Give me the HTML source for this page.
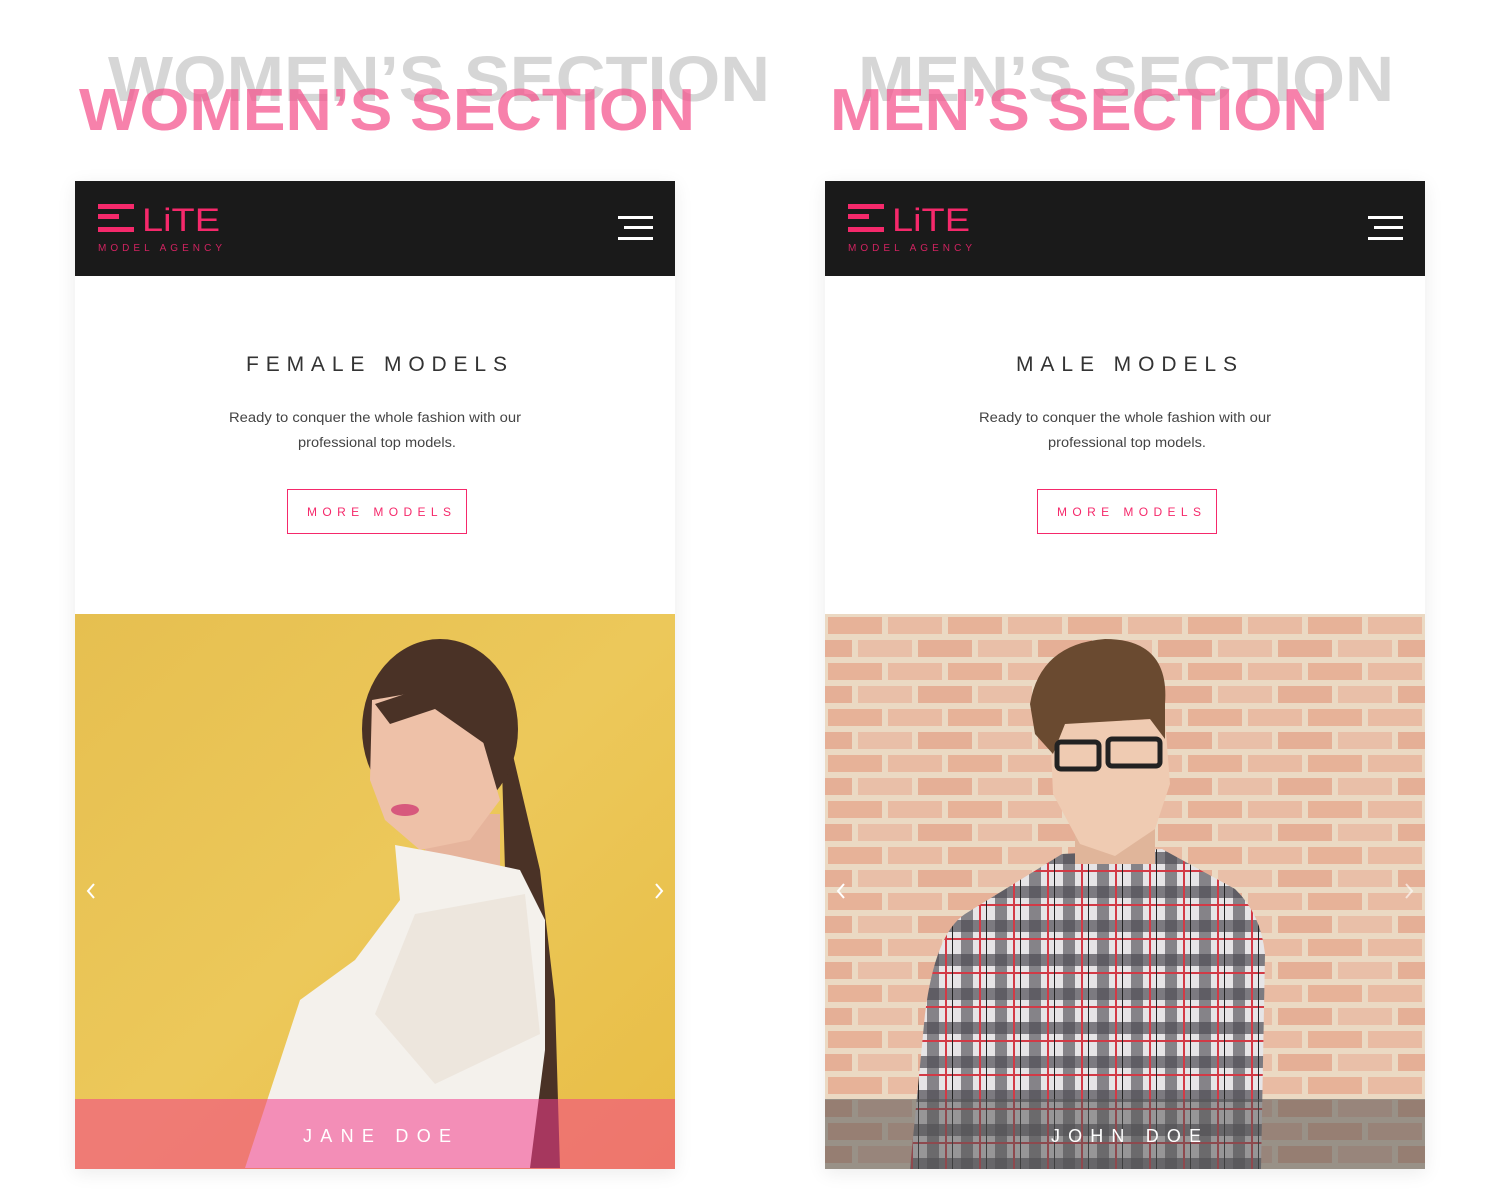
<!DOCTYPE html>
<html><head><meta charset="utf-8"><style>
html,body{margin:0;padding:0;background:#fff;width:1500px;height:1200px;overflow:hidden;font-family:"Liberation Sans",sans-serif}
.abs{position:absolute}
.panel{position:absolute;top:181px;width:600px;height:988px;background:#fff;box-shadow:0 4px 18px rgba(0,0,0,0.08)}
.nav{position:absolute;left:0;top:0;width:600px;height:95px;background:#1a1a1a}
</style></head><body>
<svg class="abs" style="left:0;top:0" width="1500" height="170">
<g font-family="Liberation Sans, sans-serif" font-weight="bold">
<text x="108" y="101" font-size="64" fill="#d6d6d6" textLength="662" lengthAdjust="spacingAndGlyphs">WOMEN’S SECTION</text>
<text x="79" y="130" font-size="59" fill="#f4508a" fill-opacity="0.72" textLength="616" lengthAdjust="spacingAndGlyphs">WOMEN’S SECTION</text>
<text x="858" y="101" font-size="64" fill="#d6d6d6" textLength="536" lengthAdjust="spacingAndGlyphs">MEN’S SECTION</text>
<text x="830" y="130" font-size="59" fill="#f4508a" fill-opacity="0.72" textLength="498" lengthAdjust="spacingAndGlyphs">MEN’S SECTION</text>
</g></svg>

<div class="panel" style="left:75px">
 <div class="nav">
  <svg width="600" height="95">
   <rect x="23" y="23" width="36" height="5" fill="#f5296b"/><rect x="23" y="33" width="21" height="5" fill="#f5296b"/><rect x="23" y="46" width="36" height="5" fill="#f5296b"/>
   <text x="67" y="50" font-size="32" fill="#f5296b" font-family="Liberation Sans,sans-serif" textLength="78" lengthAdjust="spacingAndGlyphs">LiTE</text>
   <text x="23" y="70" font-size="10" fill="#d02360" font-family="Liberation Sans,sans-serif" textLength="124" lengthAdjust="spacing">MODEL AGENCY</text>
   <rect x="543" y="35" width="35" height="3" fill="#fff"/><rect x="549" y="45" width="29" height="3" fill="#fff"/><rect x="543" y="56" width="35" height="3" fill="#fff"/>
  </svg>
 </div>
 <svg class="abs" style="left:0;top:95px" width="600" height="338">
  <text x="171" y="95" font-size="21" fill="#333" font-family="Liberation Sans,sans-serif" textLength="261" lengthAdjust="spacing">FEMALE MODELS</text>
  <text x="154" y="146" font-size="13.5" fill="#444" font-family="Liberation Sans,sans-serif" textLength="292" lengthAdjust="spacingAndGlyphs">Ready to conquer the whole fashion with our</text>
  <text x="223" y="171" font-size="13.5" fill="#444" font-family="Liberation Sans,sans-serif" textLength="158" lengthAdjust="spacingAndGlyphs">professional top models.</text>
  <rect x="212.5" y="213.5" width="179" height="44" fill="none" stroke="#f5296b" stroke-width="1"/>
  <text x="232" y="240" font-size="12" fill="#f5296b" font-family="Liberation Sans,sans-serif" textLength="144" lengthAdjust="spacing">MORE MODELS</text>
 </svg>
 <svg class="abs" style="left:0;top:433px" width="600" height="555">
  <defs><linearGradient id="yb" x1="0" y1="0" x2="1" y2="1"><stop offset="0" stop-color="#e6bf50"/><stop offset="0.5" stop-color="#ecc85a"/><stop offset="1" stop-color="#e8bd45"/></linearGradient></defs>
  <rect width="600" height="555" fill="url(#yb)"/>
  <path d="M425,86 L465,256 L480,386 L485,554 L455,554 L450,386 L430,256Z" fill="#4a3226"/>
  <ellipse cx="365" cy="115" rx="78" ry="90" fill="#4a3226"/>
  <rect x="350" y="200" width="75" height="60" fill="#e6b49c"/>
  <path d="M297,86 L355,76 L400,100 L425,186 L395,226 L345,236 L310,206 L295,166Z" fill="#eec1a8"/>
  <path d="M300,90 L360,70 L420,100 L410,130 L360,95 L315,110Z" fill="#4a3226"/>
  <ellipse cx="330" cy="196" rx="14" ry="6" fill="#d7597d"/>
  <path d="M320,231 L375,241 L445,256 L470,306 L470,436 L455,554 L170,554 L225,386 L280,346 L325,286Z" fill="#f4f1ec"/>
  <path d="M340,300 L450,280 L465,420 L360,470 L300,400Z" fill="#ebe3da" opacity="0.8"/>
  <rect x="0" y="485" width="600" height="70" fill="#f23c8c" fill-opacity="0.55"/>
  <text x="228" y="528" font-size="18" fill="#fff" font-family="Liberation Sans,sans-serif" textLength="148" lengthAdjust="spacing">JANE DOE</text>
  <path d="M19,270 L13,277 L19,284" stroke="#fff" stroke-width="2" fill="none"/>
  <path d="M581,270 L587,277 L581,284" stroke="#fff" stroke-width="2" fill="none"/>
 </svg>
</div>

<div class="panel" style="left:825px">
 <div class="nav">
  <svg width="600" height="95">
   <rect x="23" y="23" width="36" height="5" fill="#f5296b"/><rect x="23" y="33" width="21" height="5" fill="#f5296b"/><rect x="23" y="46" width="36" height="5" fill="#f5296b"/>
   <text x="67" y="50" font-size="32" fill="#f5296b" font-family="Liberation Sans,sans-serif" textLength="78" lengthAdjust="spacingAndGlyphs">LiTE</text>
   <text x="23" y="70" font-size="10" fill="#d02360" font-family="Liberation Sans,sans-serif" textLength="124" lengthAdjust="spacing">MODEL AGENCY</text>
   <rect x="543" y="35" width="35" height="3" fill="#fff"/><rect x="549" y="45" width="29" height="3" fill="#fff"/><rect x="543" y="56" width="35" height="3" fill="#fff"/>
  </svg>
 </div>
 <svg class="abs" style="left:0;top:95px" width="600" height="338">
  <text x="191" y="95" font-size="21" fill="#333" font-family="Liberation Sans,sans-serif" textLength="221" lengthAdjust="spacing">MALE MODELS</text>
  <text x="154" y="146" font-size="13.5" fill="#444" font-family="Liberation Sans,sans-serif" textLength="292" lengthAdjust="spacingAndGlyphs">Ready to conquer the whole fashion with our</text>
  <text x="223" y="171" font-size="13.5" fill="#444" font-family="Liberation Sans,sans-serif" textLength="158" lengthAdjust="spacingAndGlyphs">professional top models.</text>
  <rect x="212.5" y="213.5" width="179" height="44" fill="none" stroke="#f5296b" stroke-width="1"/>
  <text x="232" y="240" font-size="12" fill="#f5296b" font-family="Liberation Sans,sans-serif" textLength="144" lengthAdjust="spacing">MORE MODELS</text>
 </svg>
 <svg class="abs" style="left:0;top:433px" width="600" height="555">
  <defs>
   <pattern id="brick" width="120" height="46" patternUnits="userSpaceOnUse">
    <rect width="120" height="46" fill="#ead8c0"/>
    <rect x="3" y="3" width="54" height="17" fill="#e28f70" opacity="0.7"/>
    <rect x="63" y="3" width="54" height="17" fill="#e5977a" opacity="0.6"/>
    <rect x="-27" y="26" width="54" height="17" fill="#df8a6c" opacity="0.7"/>
    <rect x="33" y="26" width="54" height="17" fill="#e49a80" opacity="0.55"/>
    <rect x="93" y="26" width="54" height="17" fill="#df8a6c" opacity="0.7"/>
   </pattern>
   <pattern id="plaid" width="34" height="34" patternUnits="userSpaceOnUse">
    <rect width="34" height="34" fill="#e6e4e6"/>
    <rect x="0" y="0" width="12" height="34" fill="#5b5a60" opacity="0.7"/>
    <rect x="0" y="0" width="34" height="12" fill="#4e4d54" opacity="0.7"/>
    <rect x="18" y="0" width="2" height="34" fill="#d23a46"/>
    <rect x="0" y="18" width="34" height="2" fill="#d23a46"/>
    <rect x="25" y="0" width="1" height="34" fill="#222"/>
   </pattern>
  </defs>
  <rect width="600" height="555" fill="url(#brick)"/>
  <rect width="600" height="555" fill="#f0dccb" opacity="0.25"/>
  <path d="M237,240 L337,235 L410,275 Q436,300 440,340 L436,555 L85,555 L100,400 Q110,320 140,300Z" fill="url(#plaid)"/>
  <rect x="250" y="200" width="80" height="50" fill="#e0b59a"/>
  <path d="M225,110 L340,105 L345,170 L330,215 L290,242 L255,230 L228,180Z" fill="#efcbb2"/>
  <path d="M205,90 Q215,30 280,25 Q345,25 340,90 L340,125 L325,105 L240,110 L228,140 L210,120Z" fill="#6a4a30"/>
  <rect x="232" y="128" width="42" height="27" rx="4" fill="none" stroke="#222" stroke-width="5"/>
  <rect x="283" y="125" width="52" height="27" rx="4" fill="none" stroke="#222" stroke-width="5"/>
  <rect x="0" y="485" width="600" height="70" fill="#555" fill-opacity="0.55"/>
  <text x="226" y="528" font-size="18" fill="#fff" font-family="Liberation Sans,sans-serif" textLength="150" lengthAdjust="spacing">JOHN DOE</text>
  <path d="M19,270 L13,277 L19,284" stroke="#fff" stroke-width="2" fill="none"/>
  <path d="M581,270 L587,277 L581,284" stroke="#fff" stroke-opacity="0.6" stroke-width="2" fill="none"/>
 </svg>
</div>
</body></html>
